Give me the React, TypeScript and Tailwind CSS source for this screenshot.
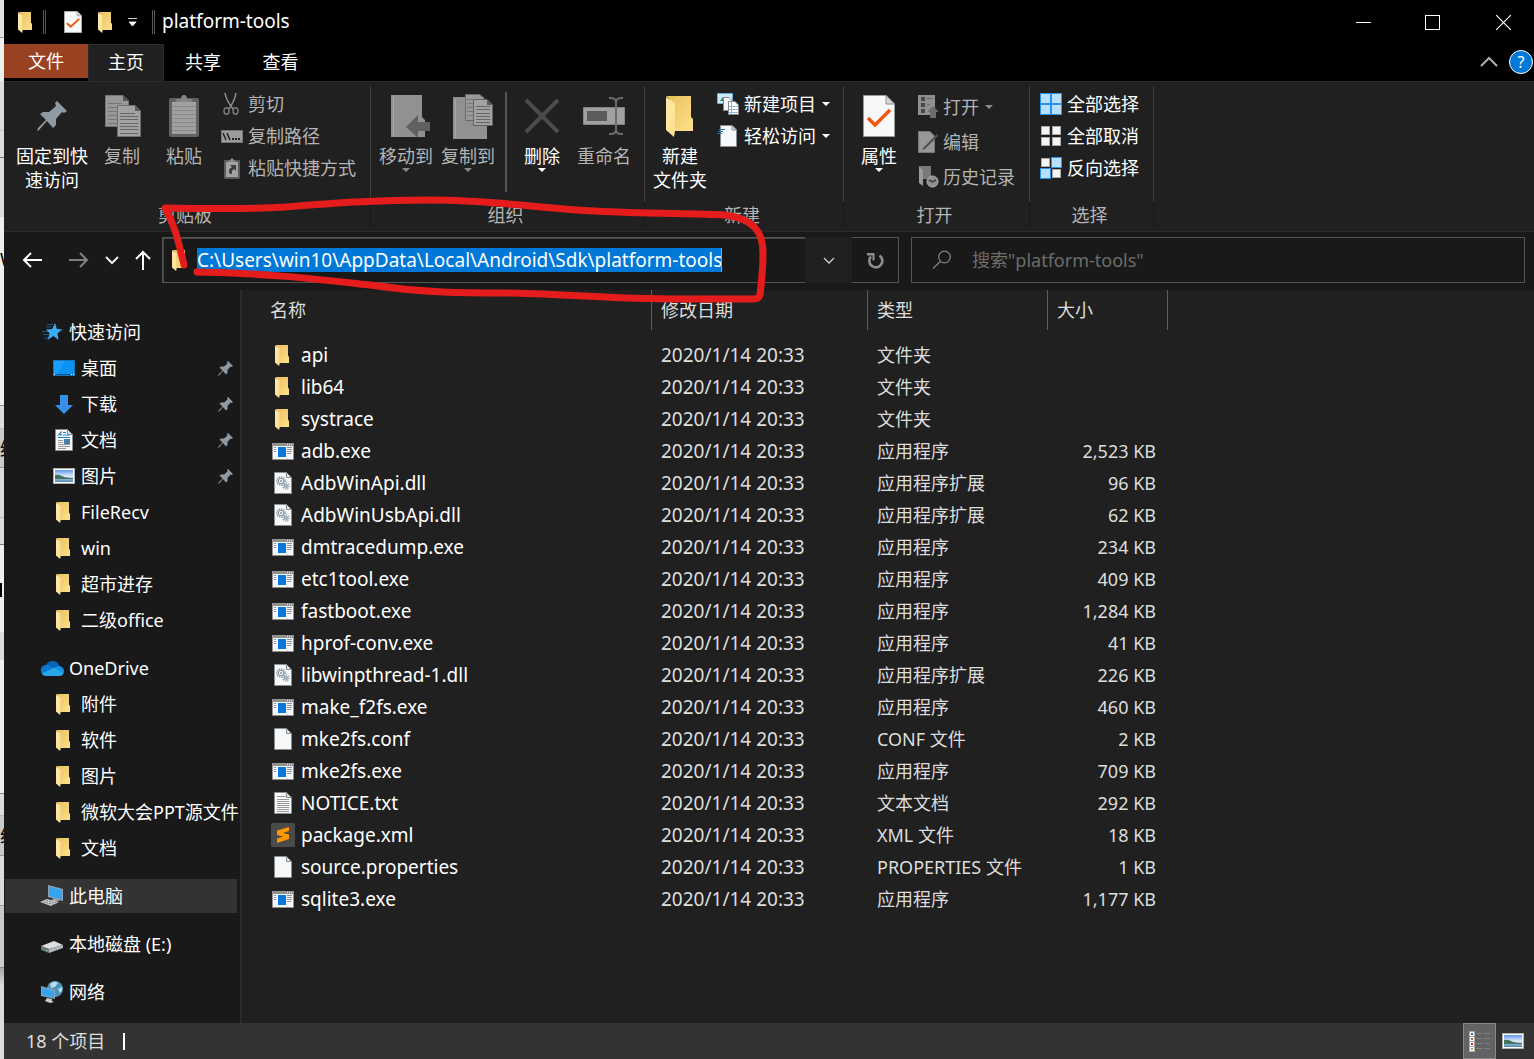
import type { ReactNode } from 'react';

/* ---------- icons ---------- */

function Folder({ className = 'w-[14px] h-[21px]' }: { className?: string }) {
  return (
    <svg viewBox="0 0 27 41" preserveAspectRatio="none" className={className} aria-hidden="true">
      <defs>
        <linearGradient id="fb" x1="0" y1="0" x2="1" y2="1">
          <stop offset="0" stopColor="#e9bf5c" />
          <stop offset="1" stopColor="#ffe18a" />
        </linearGradient>
        <linearGradient id="ff" x1="0" y1="0" x2="1" y2="1">
          <stop offset="0" stopColor="#ffe9ad" />
          <stop offset="1" stopColor="#ffe08a" />
        </linearGradient>
      </defs>
      <path d="M0 0H25V21L27 23V35H8V8Z" fill="url(#fb)" />
      <path d="M0 1L9 7V35L8 41L0 34Z" fill="url(#ff)" />
    </svg>
  );
}

function Page({ children }: { children?: ReactNode }) {
  return (
    <svg viewBox="0 0 18 22" className="h-[22px] w-[18px]" aria-hidden="true">
      <path d="M.5.5H12.5L17.5 5.5V21.5H.5Z" fill="#f7f8f9" stroke="#8b8e90" />
      <path d="M12.5.5V5.5H17.5Z" fill="#dfe2e4" stroke="#8b8e90" />
      {children}
    </svg>
  );
}

function Gear({ x, y, r, c }: { x: number; y: number; r: number; c: string }) {
  return (
    <g fill="none" stroke={c}>
      <circle cx={x} cy={y} r={r} strokeWidth="1.6" strokeDasharray="1.3 1" />
      <circle cx={x} cy={y} r={r - 1.3} />
      <circle cx={x} cy={y} r=".7" />
    </g>
  );
}

function Exe() {
  return (
    <svg viewBox="0 0 22 17" className="h-[17px] w-[22px]" aria-hidden="true">
      <path d="M.5.5H21.5V16.5H.5Z" fill="#f4f5f6" stroke="#8d9194" />
      <path d="M0 0H22V3H0Z" fill="#8d9194" />
      <path d="M15 1h1v1h-1zM17 1h1v1h-1zM19 1h1v1h-1z" fill="#e8e8e8" />
      <path d="M6 4H14V14H6Z" fill="#0a76dc" />
      <path d="M2 4.5H4M2 6.5H4M2 8.5H4M15 4.5H20M15 6.5H20M15 8.5H20M15 10.5H19" stroke="#8f9497" />
    </svg>
  );
}

function Sublime() {
  return (
    <svg viewBox="0 0 24 24" className="h-6 w-6" aria-hidden="true">
      <rect width="24" height="24" rx="1.5" fill="#4a4a4a" />
      <path d="M6 7.500L18 4V8L12 10L18 11.500V16L6 20V15.500L12 13.500L6 12Z" fill="#ff9800" />
    </svg>
  );
}

function Photo() {
  return (
    <svg viewBox="0 0 22 16" className="h-4 w-[22px]" aria-hidden="true">
      <defs>
        <linearGradient id="sky" x1="0" y1="0" x2="0" y2="1">
          <stop offset="0" stopColor="#5f97ee" />
          <stop offset=".5" stopColor="#dcecf8" />
          <stop offset="1" stopColor="#4c86b4" />
        </linearGradient>
      </defs>
      <rect x=".5" y=".5" width="21" height="15" fill="#fff" stroke="#b0b0b0" />
      <rect x="2" y="2" width="18" height="12" fill="url(#sky)" />
      <path d="M2 7Q5 6 9 8T20 10V11H2Z" fill="#41735f" />
    </svg>
  );
}

function Pin({ className = 'h-[15px] w-[15px]' }: { className?: string }) {
  return (
    <svg viewBox="0 0 30 30" className={className} aria-hidden="true">
      <path d="M20 0L30 10L27 12L25 11L19 18L19 24L16 27L10 20L2 29L0 30L1 27L9 19L3 13L6 11L12 11L19 5L18 2Z" fill="#8f9aa2" />
    </svg>
  );
}

function Caret({ className = 'text-white' }: { className?: string }) {
  return (
    <svg viewBox="0 0 8 4" className={`h-1 w-2 shrink-0 ${className}`} aria-hidden="true">
      <path d="M0 0H8L4 4Z" fill="currentColor" />
    </svg>
  );
}

function Star() {
  return (
    <svg viewBox="0 0 22 20" className="h-5 w-[22px]" aria-hidden="true">
      <path d="M14 1L15.800 7L21.500 7.500L16.500 11.200L17.500 18L12.500 14L6.500 18L8.700 11.500L5 7.500L11.200 7Z" fill="#39aef5" />
      <path d="M6 2.500H12M5 5H10M1 9.500H7M2 12.500H8M3 16H7" stroke="#1b5a88" strokeWidth="1" />
    </svg>
  );
}

function Desktop() {
  return (
    <svg viewBox="0 0 22 16" className="h-4 w-[22px]" aria-hidden="true">
      <rect x=".5" y=".5" width="21" height="15" fill="#1a9fff" stroke="#1579c0" />
      <path d="M12 1H21V14H4Z" fill="#0b92f5" />
      <path d="M1 14.500H21" stroke="#06518e" />
      <path d="M1 14.500H2M18 14.500H19M20 14.500H21" stroke="#fff" />
    </svg>
  );
}

function Download() {
  return (
    <svg viewBox="0 0 18 19" className="h-[19px] w-[18px]" aria-hidden="true">
      <path d="M5 0H13V10H18L9 19L0 10H5Z" fill="#368fe6" />
    </svg>
  );
}

function Docs() {
  return (
    <Page>
      <path d="M3 7L6 2.500V7M4 5.500H6M8 3.500H11M8 6H15M3 8.500H15" stroke="#1a86cf" fill="none" />
      <path d="M3 11.500H8M3 13.500H8M3 15.500H15M3 17.500H15M3 19.500H11" stroke="#999" />
      <rect x="9" y="10" width="6" height="5" fill="#4a7ea8" />
    </Page>
  );
}

function OneDrive() {
  return (
    <svg viewBox="0 0 24 16" className="h-4 w-6" aria-hidden="true">
      <path d="M6 5.500A7.200 7.200 0 0 1 19.500 6L12 11Z" fill="#0a63b8" />
      <path d="M6 15A5 5 0 0 1 5.500 5Q8 4 10.500 6L18 10L5 15.500Z" fill="#0a79d4" />
      <path d="M14.500 8Q17 5.500 20 6Q24 7.500 24 11Q24 13 23 14Z" fill="#1490df" />
      <path d="M1.500 13.500L14.500 7.800L23.500 13Q22.500 16 19.500 16H6Q3 16 1.500 13.500Z" fill="#28a8ea" />
    </svg>
  );
}

function ThisPC() {
  return (
    <svg viewBox="0 0 24 22" className="h-[22px] w-6" aria-hidden="true">
      <path d="M8 0L23 4V16L8 12Z" fill="#8fa3b0" />
      <path d="M9 1.500L22 5V14.500L9 11Z" fill="#34a5f0" />
      <path d="M13 13L18 14.500L20 16L12 16Z" fill="#9da5aa" />
      <path d="M7 14L19 17L11 21L0 17Z" fill="#c9cdd0" />
      <path d="M3 17L14 19.500M6 15.500L16 18" stroke="#74797c" strokeDasharray="2 1" />
    </svg>
  );
}

function Disk() {
  return (
    <svg viewBox="0 0 22 12" className="mt-1.5 h-3 w-[22px]" aria-hidden="true">
      <path d="M0 5L13 0L22 4L8 8Z" fill="#dcdee0" />
      <path d="M0 5L8 8V12L0 9Z" fill="#737679" />
      <path d="M8 8L22 4V7L8 12Z" fill="#b4b7ba" />
      <path d="M5 9H7V10H5Z" fill="#45d35b" />
    </svg>
  );
}

function Network() {
  return (
    <svg viewBox="0 0 22 22" className="h-[22px] w-[22px]" aria-hidden="true">
      <circle cx="14" cy="8" r="8" fill="#4a94b8" />
      <path d="M9 3Q13 -1 17 2L14 6L10 7ZM17 8L21 6Q22 10 19 12Z" fill="#b9dceb" />
      <path d="M0 5L14 9V18L0 15Z" fill="#8fa3b0" />
      <path d="M1 6.500L13 10V17L1 14Z" fill="#35a4f1" />
      <path d="M6 17L11 18V20L13 21L9 22L4 20Z" fill="#c5cace" />
    </svg>
  );
}

function CopyIcon() {
  return (
    <svg viewBox="0 0 36 42" className="h-[42px] w-9" aria-hidden="true">
      <path d="M.5.5H18L23.500 6V31.500H.5Z" fill="#989898" stroke="#767676" />
      <path d="M18 0V6H24Z" fill="#565656" />
      <path d="M3 8.500H17M3 12.500H20M3 16.500H13M3 20.500H13M3 24.500H13M3 28.500H13" stroke="#777" />
      <path d="M12.500 10.500H30L35.500 16V41.500H12.500Z" fill="#a2a2a2" stroke="#6e6e6e" />
      <path d="M30 10V16H36Z" fill="#5c5c5c" />
      <path d="M15 18.500H30M15 21.500H33M15 24.500H33M15 28.500H33M15 31.500H33M15 34.500H33M15 38.500H33" stroke="#666" />
    </svg>
  );
}

function PasteIcon() {
  return (
    <svg viewBox="0 0 30 42" className="h-[42px] w-[30px]" aria-hidden="true">
      <rect y="3" width="30" height="39" rx="2" fill="#626262" />
      <rect x="3" y="7" width="24" height="32" fill="#a0a0a0" />
      <path d="M6 7L8 4H12Q12 0 15 0T18 4H22L24 7Z" fill="#858585" />
      <path d="M3 11.500H27M3 15.500H27M3 19.500H27M3 23.500H27M3 27.500H27M3 31.500H27M3 35.500H27" stroke="#8a8a8a" />
    </svg>
  );
}

function MoveTo() {
  return (
    <svg viewBox="0 0 40 43" className="h-[43px] w-10" aria-hidden="true">
      <path d="M0 0H31V22L34 25V42H0Z" fill="#919191" />
      <path d="M2.500 2V41" stroke="#a8a8a8" />
      <path d="M15 32L27 20V27H39V36H27V43Z" fill="#606060" />
    </svg>
  );
}

function CopyTo() {
  return (
    <svg viewBox="0 0 40 45" className="h-[45px] w-10" aria-hidden="true">
      <path d="M0 3H31V24L34 27V45H0Z" fill="#919191" />
      <path d="M2.500 5V44" stroke="#a8a8a8" />
      <path d="M12.500.500H27L32 5.500V26.500H12.500Z" fill="#999" stroke="#6a6a6a" />
      <path d="M14 5.500H26M14 9.500H20M14 13.500H20M14 17.500H20M14 21.500H20" stroke="#777" />
      <path d="M20.500 5.500H34L39.500 11V31.500H20.500Z" fill="#a2a2a2" stroke="#626262" />
      <path d="M34 5V11H40Z" fill="#5c5c5c" />
      <path d="M23 12.500H37M23 15.500H37M23 19.500H37M23 22.500H37M23 25.500H37M23 28.500H37" stroke="#666" />
    </svg>
  );
}

function DeleteIcon() {
  return (
    <svg viewBox="0 0 36 36" className="h-9 w-9" aria-hidden="true">
      <path d="M2 2L34 34M34 2L2 34" stroke="#4b4b4b" strokeWidth="4" />
    </svg>
  );
}

function RenameIcon() {
  return (
    <svg viewBox="0 0 42 38" className="h-[38px] w-[42px]" aria-hidden="true">
      <path d="M.5 10.500H41.500V27.500H.5Z" fill="#a0a0a0" stroke="#858585" />
      <path d="M4 14H24V24H4Z" fill="#5c5c5c" />
      <path d="M26 1H28Q33 1 33 6V32Q33 37 28 37H26M40 1H38Q33 1 33 6M33 32Q33 37 38 37H40" fill="none" stroke="#6b6b6b" strokeWidth="2" />
    </svg>
  );
}

function Checked({ className }: { className: string }) {
  return (
    <svg viewBox="0 0 32 42" preserveAspectRatio="none" className={className} aria-hidden="true">
      <path d="M.5.5H23L31.500 9V41.500H.5Z" fill="#f7f8f9" stroke="#9b9b9b" />
      <path d="M23 .5V9H31.500Z" fill="#d8dadb" stroke="#8a8a8a" />
      <path d="M5 23L12 30L27 15" fill="none" stroke="#f2560f" strokeWidth="3.500" />
    </svg>
  );
}

function Scissors() {
  return (
    <svg viewBox="0 0 16 22" className="h-[22px] w-4" aria-hidden="true">
      <path d="M2 0Q3 7 10 16M13 0Q12 7 6 16" fill="none" stroke="#8b8b8b" strokeWidth="1.500" />
      <ellipse cx="3.500" cy="18" rx="2.500" ry="3.200" fill="none" stroke="#7a7a7a" strokeWidth="1.500" />
      <ellipse cx="12.500" cy="18" rx="2.500" ry="3.200" fill="none" stroke="#7a7a7a" strokeWidth="1.500" />
    </svg>
  );
}

function PathIcon() {
  return (
    <svg viewBox="0 0 22 13" className="h-[13px] w-[22px]" aria-hidden="true">
      <path d="M.5.5H21.500V12.500H.5Z" fill="#9c9c9c" stroke="#777" />
      <path d="M2 3L5 10M6 3L9 10" stroke="#222" strokeWidth="1.500" />
      <path d="M11 8h2v2h-2zM14 8h2v2h-2zM17 8h2v2h-2z" fill="#222" />
    </svg>
  );
}

function PasteLink() {
  return (
    <svg viewBox="0 0 16 21" className="h-[21px] w-4" aria-hidden="true">
      <rect y="2" width="16" height="19" rx="1" fill="#5b5b5b" />
      <path d="M2 4H14V19H2Z" fill="#a3a3a3" />
      <path d="M4 4L6 2L8 0L10 2L12 4Z" fill="#8b8b8b" />
      <path d="M6 7H12V13L10 11Q7 13 8 16H6Q3 12 8 9Z" fill="#3c3c3c" />
    </svg>
  );
}

function NewItem() {
  return (
    <svg viewBox="0 0 22 22" className="h-[22px] w-[22px]" aria-hidden="true">
      <path d="M.5.5H15.500V10.500H.5Z" fill="#cbe8f7" stroke="#68afd3" />
      <path d="M3 8L6 4L10 8Z" fill="#3f7867" />
      <path d="M6.500 4.500H12L15.500 8V17.500H6.500Z" fill="#f5f5f5" stroke="#888" />
      <path d="M11.500 8.500H18L21.500 12V21.500H11.500Z" fill="#fff" stroke="#888" />
      <path d="M12 13.500H21M12 16.500H21M12 19.500H21" stroke="#8fb9e0" />
      <path d="M14.500 9V21" stroke="#e59a9a" />
    </svg>
  );
}

function EasyAccess() {
  return (
    <svg viewBox="0 0 20 22" className="h-[22px] w-5" aria-hidden="true">
      <path d="M3.500.5H15L19.500 5V21.500H3.500Z" fill="#f7f8f9" stroke="#8b8e90" />
      <path d="M15 .5V5H19.500Z" fill="#d8dadb" stroke="#8b8e90" />
      <path d="M2 4.500H8M1 6.500H6M0 8.500H5" stroke="#2173b8" />
    </svg>
  );
}

function OpenIcon() {
  return (
    <svg viewBox="0 0 20 23" className="h-[23px] w-5" aria-hidden="true">
      <path d="M0 0H17V20H0Z" fill="#8f8f8f" />
      <path d="M3 2h4v4h-4zM3 8h4v4h-4zM3 14h4v4h-4z" fill="#4a4a4a" />
      <path d="M9 3.500H15M9 9.500H12" stroke="#666" />
      <path d="M15 11L20 16V17H18V23H12V17H10V16Z" fill="#6c6c6c" />
    </svg>
  );
}

function EditIcon() {
  return (
    <svg viewBox="0 0 20 22" className="h-[22px] w-5" aria-hidden="true">
      <path d="M.5.5H12L16.500 5V21.500H.5Z" fill="#989898" stroke="#777" />
      <path d="M19 3L6 16L4 19L7 18L20 5Z" fill="#505050" />
    </svg>
  );
}

function HistoryIcon() {
  return (
    <svg viewBox="0 0 21 22" className="h-[22px] w-[21px]" aria-hidden="true">
      <path d="M1 0H13V13H5V17H1Z" fill="#787878" />
      <path d="M1 1L5 4V20L1 17Z" fill="#9a9a9a" />
      <circle cx="14.500" cy="15.500" r="5.500" fill="#8f8f8f" stroke="#b0b0b0" />
      <path d="M11 14L14.500 16L18 14" stroke="#3e3e3e" fill="none" strokeWidth="1.500" />
    </svg>
  );
}

function Squares({ on }: { on: boolean[] }) {
  const at = [[0, 0], [11, 0], [0, 11], [11, 11]];
  return (
    <svg viewBox="0 0 22 22" className="h-[22px] w-[22px]" aria-hidden="true">
      {at.map(([x, y], i) =>
        on[i] ? (
          <rect key={i} x={x + 0.5} y={y + 0.5} width="10" height="10" fill="#b7e0ff" stroke="#2b94ea" />
        ) : (
          <rect key={i} x={x + 1.5} y={y + 1.5} width="8" height="8" fill="#f4f4f4" stroke="#a9a9a9" />
        ),
      )}
    </svg>
  );
}

/* ---------- ribbon ---------- */

function Big({ icon, label, w, dim, caret }: { icon: ReactNode; label: string[]; w: string; dim?: boolean; caret?: boolean }) {
  return (
    <button className={`flex flex-col items-center ${w} ${dim ? 'text-[#b4b4b4]' : 'text-white'}`}>
      <span className="mb-1 flex h-12 items-center justify-center">{icon}</span>
      {label.map((l) => (
        <span key={l} className="leading-6">{l}</span>
      ))}
      {caret && <Caret className={dim ? 'text-[#8a8a8a]' : 'text-white'} />}
    </button>
  );
}

function Small({ icon, label, dim, caret, h = 'h-8', iw = 'w-[27px]' }: { icon: ReactNode; label: string; dim?: boolean; caret?: boolean; h?: string; iw?: string }) {
  return (
    <button className={`flex items-center ${h} ${dim ? 'text-[#b4b4b4]' : 'text-white'}`}>
      <span className={`flex shrink-0 ${iw}`}>{icon}</span>
      <span className="whitespace-nowrap">{label}</span>
      {caret && <span className="pl-1.5"><Caret className={dim ? 'text-[#8a8a8a]' : 'text-white'} /></span>}
    </button>
  );
}

function Group({ label, w, children }: { label: string; w: string; children: ReactNode }) {
  return (
    <section className={`flex shrink-0 flex-col ${w}`} aria-label={label}>
      <div className="mt-1 flex h-[116px] border-r border-[#3f3f3f] pt-0.5">{children}</div>
      <div className="h-[26px] border-r border-[#191919] pr-1 text-center leading-[26px] text-[#b4b4b4]">{label}</div>
    </section>
  );
}

/* ---------- data ---------- */

type Kind = 'dir' | 'exe' | 'dll' | 'page' | 'txt' | 'xml';
const files: [Kind, string, string, string][] = [
  ['dir', 'api', '文件夹', ''],
  ['dir', 'lib64', '文件夹', ''],
  ['dir', 'systrace', '文件夹', ''],
  ['exe', 'adb.exe', '应用程序', '2,523 KB'],
  ['dll', 'AdbWinApi.dll', '应用程序扩展', '96 KB'],
  ['dll', 'AdbWinUsbApi.dll', '应用程序扩展', '62 KB'],
  ['exe', 'dmtracedump.exe', '应用程序', '234 KB'],
  ['exe', 'etc1tool.exe', '应用程序', '409 KB'],
  ['exe', 'fastboot.exe', '应用程序', '1,284 KB'],
  ['exe', 'hprof-conv.exe', '应用程序', '41 KB'],
  ['dll', 'libwinpthread-1.dll', '应用程序扩展', '226 KB'],
  ['exe', 'make_f2fs.exe', '应用程序', '460 KB'],
  ['page', 'mke2fs.conf', 'CONF 文件', '2 KB'],
  ['exe', 'mke2fs.exe', '应用程序', '709 KB'],
  ['txt', 'NOTICE.txt', '文本文档', '292 KB'],
  ['xml', 'package.xml', 'XML 文件', '18 KB'],
  ['page', 'source.properties', 'PROPERTIES 文件', '1 KB'],
  ['exe', 'sqlite3.exe', '应用程序', '1,177 KB'],
];

function FileIcon({ kind }: { kind: Kind }) {
  switch (kind) {
    case 'dir':
      return <Folder />;
    case 'exe':
      return <Exe />;
    case 'xml':
      return <Sublime />;
    case 'dll':
      return (
        <Page>
          <Gear x={7} y={9} r={4} c="#8b959b" />
          <Gear x={12} y={14} r={3} c="#93a9b8" />
        </Page>
      );
    case 'txt':
      return (
        <Page>
          <path d="M3 4.500H12M3 7.500H15M3 9.500H15M3 11.500H15M3 13.500H15M3 15.500H15M3 17.500H15M3 19.500H15" stroke="#999" />
        </Page>
      );
    default:
      return <Page />;
  }
}

type Item = { icon?: ReactNode; label: string; pin?: boolean };
type Section = { icon: ReactNode; label: string; items?: Item[]; active?: boolean };
const tree: Section[] = [
  {
    icon: <Star />,
    label: '快速访问',
    items: [
      { icon: <Desktop />, label: '桌面', pin: true },
      { icon: <Download />, label: '下载', pin: true },
      { icon: <Docs />, label: '文档', pin: true },
      { icon: <Photo />, label: '图片', pin: true },
      { label: 'FileRecv' },
      { label: 'win' },
      { label: '超市进存' },
      { label: '二级office' },
    ],
  },
  {
    icon: <OneDrive />,
    label: 'OneDrive',
    items: [{ label: '附件' }, { label: '软件' }, { label: '图片' }, { label: '微软大会PPT源文件' }, { label: '文档' }],
  },
  { icon: <ThisPC />, label: '此电脑', active: true },
  { icon: <Disk />, label: '本地磁盘 (E:)' },
  { icon: <Network />, label: '网络' },
];

function Separator() {
  return <span className="block h-6 w-[3px] shrink-0 border-x border-[#555]" />;
}

export default function App() {
  return (
    <div className="relative flex min-h-screen overflow-hidden bg-[#e9e9e9] font-['Noto_Sans','Noto_Sans_CJK_SC',sans-serif] text-[18px] leading-6 text-white">
      {/* sliver of the window behind */}
      <div className="flex w-1 shrink-0 flex-col overflow-hidden whitespace-nowrap text-black" aria-hidden="true">
        <div className="h-[38px] border-b border-[#999] bg-[#e2e2e2]" />
        <div className="h-[43px] bg-[#efefef]" />
        <div className="h-[50px] border-b border-[#c4c4c4] bg-[#dcdcdc]" />
        <div className="h-[27px] border-b border-[#777] bg-[#dcdcdc]" />
        <div className="h-[59px] bg-[#dcdcdc]" />
        <div className="h-[189px] border-b border-[#888] bg-[#efefef] pt-[30px]">W</div>
        <div className="h-[23px] border-b border-[#bbb] bg-[#dcdcdc]" />
        <div className="h-[39px] border-b border-[#999] bg-[#cacaca] pt-2">绣</div>
        <div className="h-[50px] border-b border-[#bbb] bg-[#dcdcdc]" />
        <div className="h-[27px] border-b border-[#777] bg-[#dcdcdc]" />
        <div className="h-[87px] bg-[#efefef] pt-[38px]">
          <div className="h-[14px] w-0.5 bg-black" />
        </div>
        <div className="h-7 bg-[#dcdcdc]" />
        <div className="h-[134px] border-b border-[#888] bg-[#efefef]" />
        <div className="h-[22px] border-b border-[#bbb] bg-[#dcdcdc]" />
        <div className="h-10 border-b border-[#999] bg-[#cacaca] pt-2">络</div>
        <div className="h-[50px] border-b border-[#999] bg-[#dcdcdc]" />
        <div className="h-[62px] border-b border-[#888] bg-[#cacaca]" />
        <div className="flex-1 bg-linear-to-b from-[#a8a8a8] to-[#dcdcdc] to-20%" />
      </div>

      <div className="flex min-w-0 flex-1 flex-col bg-[#191919]">
        {/* title bar */}
        <header className="flex h-11 items-center bg-black">
          <div className="flex items-center pl-[14px]">
            <Folder />
            <span className="pl-[11px]"><Separator /></span>
            <button className="pl-[18px]" aria-label="属性"><Checked className="h-[22px] w-[18px]" /></button>
            <button className="pl-4" aria-label="新建文件夹"><Folder /></button>
            <button className="pl-4" aria-label="自定义快速访问工具栏">
              <svg viewBox="0 0 9 8" className="h-2 w-[9px]">
                <path d="M0 .5H9M1 4H8L4.500 8Z" fill="#fff" stroke="#fff" strokeWidth=".8" />
              </svg>
            </button>
            <span className="pl-[15px]"><Separator /></span>
          </div>
          <h1 className="flex-1 pb-0.5 pl-[7px] text-[19px]">platform-tools</h1>
          <button className="flex w-[70px] justify-center" aria-label="最小化"><span className="h-px w-[15px] bg-white" /></button>
          <button className="flex w-[68px] justify-center" aria-label="最大化"><span className="h-[15px] w-[15px] border border-white" /></button>
          <button className="flex w-[68px] justify-center pl-1.5" aria-label="关闭">
            <svg viewBox="0 0 15 15" className="h-[15px] w-[15px]"><path d="M0 0L15 15M15 0L0 15" stroke="#fff" strokeWidth="1.200" /></svg>
          </button>
        </header>

        {/* tabs */}
        <nav className="flex h-[37px] items-stretch bg-black">
          <button className="mb-[3px] w-[84px] bg-[#994222]">文件</button>
          <button className="w-[76px] border-x border-t border-[#2b2b2b] bg-[#202020] pb-0.5">主页</button>
          <button className="w-[78px] pb-px">共享</button>
          <button className="w-[77px] pb-px">查看</button>
          <div className="flex flex-1 items-center justify-end gap-[11px] pb-0.5 pr-px">
            <button aria-label="最小化功能区">
              <svg viewBox="0 0 18 11" className="h-[11px] w-[18px]"><path d="M1 10L9 2L17 10" fill="none" stroke="#b0b0b0" strokeWidth="2" /></svg>
            </button>
            <button className="flex h-6 w-6 items-center justify-center rounded-full border border-white bg-[#0078d7] text-[16px]" aria-label="帮助">?</button>
          </div>
        </nav>

        {/* ribbon */}
        <div className="flex h-[151px] border-y border-[#2b2b2b] bg-[#202020]">
          <Group label="剪贴板" w="w-[367px]">
            <div className="flex pl-2 pt-1">
              <Big w="w-20" icon={<Pin className="h-[30px] w-[30px]" />} label={['固定到快', '速访问']} />
              <Big w="w-[60px]" dim icon={<span className="pl-0.5"><CopyIcon /></span>} label={['复制']} />
              <Big w="w-16" dim icon={<PasteIcon />} label={['粘贴']} />
            </div>
            <div className="flex flex-col pl-[5px]">
              <Small dim icon={<span className="pl-0.5"><Scissors /></span>} label="剪切" />
              <Small dim icon={<PathIcon />} label="复制路径" />
              <Small dim icon={<span className="pl-[3px]"><PasteLink /></span>} label="粘贴快捷方式" />
            </div>
          </Group>
          <Group label="组织" w="w-[274px]">
            <div className="flex items-start pl-1 pt-1">
              <Big w="w-[62px]" dim caret icon={<span className="pl-[9px]"><MoveTo /></span>} label={['移动到']} />
              <Big w="w-[62px]" dim caret icon={<span className="pl-[9px]"><CopyTo /></span>} label={['复制到']} />
              <span className="mx-1.5 h-[100px] w-0.5 bg-[#555]" />
              <Big w="w-[58px]" caret icon={<DeleteIcon />} label={['删除']} />
              <Big w="w-[66px]" dim icon={<RenameIcon />} label={['重命名']} />
            </div>
          </Group>
          <Group label="新建" w="w-[199px]">
            <div className="flex pl-1 pt-1">
              <Big w="w-[62px]" icon={<span className="pr-0.5"><Folder className="h-[41px] w-[27px]" /></span>} label={['新建', '文件夹']} />
            </div>
            <div className="flex flex-col pl-1.5">
              <Small caret icon={<NewItem />} label="新建项目" />
              <Small caret icon={<EasyAccess />} label="轻松访问" />
            </div>
          </Group>
          <Group label="打开" w="w-[186px]">
            <div className="flex pl-[5px] pt-1">
              <Big w="w-[60px]" caret icon={<Checked className="h-[42px] w-8" />} label={['属性']} />
            </div>
            <div className="flex flex-col pl-[9px] pt-px">
              <Small h="h-[35px]" iw="w-[25px]" dim caret icon={<OpenIcon />} label="打开" />
              <Small h="h-[35px]" iw="w-[25px]" dim icon={<EditIcon />} label="编辑" />
              <Small h="h-[35px]" iw="w-[25px]" dim icon={<HistoryIcon />} label="历史记录" />
            </div>
          </Group>
          <Group label="选择" w="w-[124px]">
            <div className="flex flex-col pl-[10px]">
              <Small icon={<Squares on={[true, true, true, true]} />} label="全部选择" />
              <Small icon={<Squares on={[false, false, false, false]} />} label="全部取消" />
              <Small icon={<Squares on={[false, true, true, false]} />} label="反向选择" />
            </div>
          </Group>
        </div>

        {/* address row */}
        <div className="flex h-[58px] items-center pb-1 pr-[9px] pt-[2px]">
          <div className="flex w-[158px] shrink-0 items-center pl-[18px]">
            <button aria-label="后退">
              <svg viewBox="0 0 20 16" className="h-4 w-5"><path d="M20 8H2M9 1L2 8L9 15" fill="none" stroke="#fff" strokeWidth="2" /></svg>
            </button>
            <button className="pl-[27px]" aria-label="前进">
              <svg viewBox="0 0 20 16" className="h-4 w-5"><path d="M0 8H18M11 1L18 8L11 15" fill="none" stroke="#808080" strokeWidth="2" /></svg>
            </button>
            <button className="pl-4" aria-label="最近浏览的位置">
              <svg viewBox="0 0 14 9" className="h-[9px] w-[14px]"><path d="M1 1L7 7L13 1" fill="none" stroke="#eee" strokeWidth="2" /></svg>
            </button>
            <button className="pl-4" aria-label="上移">
              <svg viewBox="0 0 16 20" className="h-5 w-4"><path d="M8 20V2M1 9L8 2L15 9" fill="none" stroke="#fff" strokeWidth="2" /></svg>
            </button>
          </div>
          <div className="flex h-[46px] w-[737px] shrink-0">
            <div className="flex flex-1 items-center border-y border-l border-[#555]">
              <div className="flex h-full flex-1 items-center border-l border-t border-[#444] pl-2">
                <Folder />
                <input
                  aria-label="地址"
                  defaultValue={'C:\\Users\\win10\\AppData\\Local\\Android\\Sdk\\platform-tools'}
                  className="mb-0.5 ml-[11px] h-6 w-[525px] border-r border-[#ff8a2a] bg-[#0078d7] text-[19px] text-white outline-none"
                />
              </div>
            </div>
            <button className="flex w-[47px] items-center justify-center bg-[#202020]" aria-label="以前的位置">
              <svg viewBox="0 0 12 7" className="h-[7px] w-3"><path d="M1 1L6 6L11 1" fill="none" stroke="#d0d0d0" strokeWidth="1.300" /></svg>
            </button>
            <button className="flex w-[47px] items-center justify-center border-y border-r border-[#555]" aria-label="刷新">
              <svg viewBox="0 0 17 17" className="h-[17px] w-[17px]">
                <path d="M12.500 3.500A6.500 6.500 0 1 1 4 4.500" fill="none" stroke="#8f8f8f" strokeWidth="2.600" />
                <path d="M0 1H7.500V8.500H5.500V3.500H0Z" fill="#8f8f8f" />
              </svg>
            </button>
          </div>
          <label className="ml-3 flex h-[46px] flex-1 items-center border border-[#555] pl-5">
            <svg viewBox="0 0 20 20" className="h-5 w-5 shrink-0">
              <circle cx="12.500" cy="7" r="5.800" fill="none" stroke="#808080" strokeWidth="1.300" />
              <path d="M8.500 11.200L1 18.500" stroke="#808080" strokeWidth="1.300" />
            </svg>
            <input aria-label="搜索" placeholder={'搜索"platform-tools"'} className="ml-5 min-w-0 flex-1 bg-transparent outline-none placeholder:text-[#6d6d6d]" />
          </label>
        </div>

        {/* body */}
        <div className="flex flex-1">
          <aside className="flex w-[238px] shrink-0 flex-col gap-3 overflow-hidden border-r-2 border-[#2b2b2b] pt-6">
            {tree.map((s) => (
              <div key={s.label}>
                <div className={s.active ? 'ml-px mr-[3px] flex h-9 items-center border-y border-[#191919] bg-[#333]' : 'ml-px mr-[3px] flex h-9 items-center'}>
                  <span className="ml-[35px] flex w-6 shrink-0 justify-center">{s.icon}</span>
                  <span className="pl-[5px]">{s.label}</span>
                </div>
                {s.items?.map((it) => (
                  <div key={it.label} className="flex h-9 items-center pl-12 pr-[7px]">
                    <span className="flex w-6 shrink-0 justify-center">{it.icon ?? <span className="pr-0.5"><Folder /></span>}</span>
                    <span className="flex-1 whitespace-nowrap pl-[5px]">{it.label}</span>
                    {it.pin && <Pin />}
                  </div>
                ))}
              </div>
            ))}
          </aside>

          <main className="flex-1 bg-[#202020]">
            <table className="w-[926px] table-fixed border-separate border-spacing-0 text-left">
              <thead>
                <tr className="h-10 text-[#dedede]">
                  <th className="relative w-[410px] border-r border-[#5f5f5f] pl-7 font-normal">
                    名称
                    <svg viewBox="0 0 12 6" className="absolute left-[208px] top-0 h-1.5 w-3"><path d="M1 6L6 1L11 6" fill="none" stroke="#9a9a9a" /></svg>
                  </th>
                  <th className="w-[216px] border-r border-[#5f5f5f] pl-[9px] font-normal">修改日期</th>
                  <th className="w-[180px] border-r border-[#5f5f5f] pl-[9px] font-normal">类型</th>
                  <th className="w-[120px] border-r border-[#5f5f5f] pl-[9px] font-normal">大小</th>
                </tr>
              </thead>
              <tbody className="before:block before:h-[9px] before:content-['']">
                {files.map(([kind, name, type, size]) => (
                  <tr key={name} className="h-8 text-[#dedede]">
                    <td>
                      <span className="flex h-8 items-center pl-7 text-white">
                        <span className="flex w-[26px] shrink-0 justify-center">
                          {kind === 'dir' ? <span className="pr-0.5"><Folder /></span> : <FileIcon kind={kind} />}
                        </span>
                        <span className="pl-[5px] text-[19px]">{name}</span>
                      </span>
                    </td>
                    <td className="pl-[9px] text-[19px]">2020/1/14 20:33</td>
                    <td className="pl-[9px]">{type}</td>
                    <td className="pr-3 text-right">{size}</td>
                  </tr>
                ))}
              </tbody>
            </table>
          </main>
        </div>

        {/* status bar */}
        <footer className="flex h-9 items-center bg-[#333]">
          <span className="pl-[22px] text-[#dedede]">18 个项目</span>
          <span className="ml-[18px] h-[17px] w-0.5 bg-white" />
          <div className="flex h-full flex-1 items-center justify-end pr-[10px]">
            <button className="mr-1.5 flex h-full w-[33px] items-center justify-center border border-[#888] bg-[#636363]" aria-label="详细信息">
              <svg viewBox="0 0 22 21" className="h-[21px] w-[22px]">
                {['#2a6fa5', '#b06a3a', '#c22', '#8fae6a'].map((c, i) => (
                  <g key={c}>
                    <rect x=".5" y={i * 5 + 0.5} width="5" height="5" fill="#fff" stroke="#aaa" />
                    <rect x="2" y={i * 5 + 2} width="2" height="2" fill={c} />
                    <path d={`M7 ${i * 5 + 2.5}H13M15 ${i * 5 + 2.5}H21`} stroke="#808080" />
                  </g>
                ))}
              </svg>
            </button>
            <button aria-label="大缩略图"><Photo /></button>
          </div>
        </footer>
      </div>

      {/* hand-drawn marker around the address */}
      <svg viewBox="0 0 620 110" className="pointer-events-none absolute left-[155px] top-[195px] h-[110px] w-[620px]" aria-hidden="true">
        <path
          d="M29 70C24 50 21 32 10 13C60 14 95 14 130 12C180 8 220 5 275 5C340 5 390 14 440 16C490 19 540 18 570 20C600 24 608 38 608 58C608 78 606 90 605 100Q604 104 598 104H540C460 105 400 98 350 98C310 98 270 98 215 90C160 84 110 78 42 77"
          fill="none"
          stroke="#e51c1c"
          strokeWidth="7"
          strokeLinecap="round"
          strokeLinejoin="round"
        />
      </svg>
    </div>
  );
}
